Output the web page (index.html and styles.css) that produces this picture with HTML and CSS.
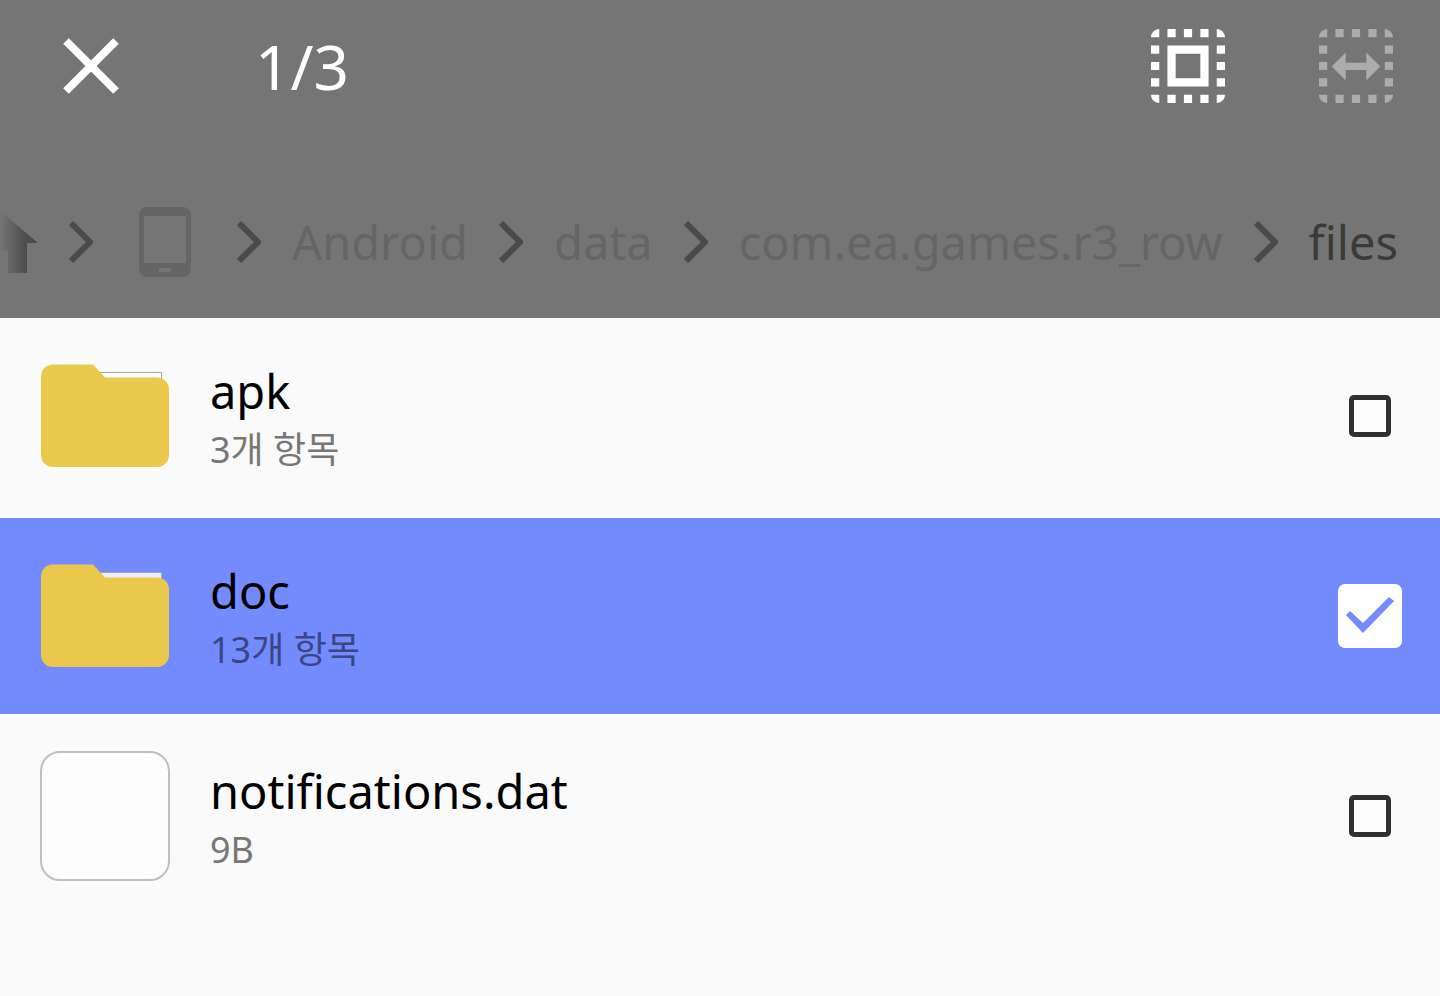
FILE: index.html
```html
<!DOCTYPE html>
<html lang="ko">
<head>
  <meta charset="UTF-8" />
  <meta name="viewport" content="width=device-width, initial-scale=1.0" />
  <title>files</title>
  <link rel="stylesheet" href="styles.css">
</head>
<body>
  <!-- Shared icons -->
  <svg class="icon-defs" aria-hidden="true">
    <symbol id="chevron" viewBox="0 0 24 42">
      <path d="M2 2l19 19L2 40" fill="none" stroke="currentColor" stroke-width="6" />
    </symbol>
    <symbol id="folder" viewBox="0 0 130 104">
      <path class="paper" d="M56 8.500H121.500V20H56z" />
      <path fill="#eac84b" d="M13 .5H53L65 13.500H117a12 12 0 0 1 12 12V91a12 12 0 0 1-12 12H13A12 12 0 0 1 1 91V12.500A12 12 0 0 1 13 .5z" />
    </symbol>
    <symbol id="select-frame" viewBox="3 3 18 18">
      <path fill="currentColor" d="M3 5h2V3c-1.100 0-2 .9-2 2zm0 8h2v-2H3v2zm4 8h2v-2H7v2zM3 9h2V7H3v2zm10-6h-2v2h2V3zm6 0v2h2c0-1.100-.9-2-2-2zM5 21v-2H3c0 1.100.9 2 2 2zm-2-4h2v-2H3v2zM9 3H7v2h2V3zm2 18h2v-2h-2v2zm8-8h2v-2h-2v2zm0 8c1.100 0 2-.9 2-2h-2v2zm0-12h2V7h-2v2zm0 8h2v-2h-2v2zm-4 4h2v-2h-2v2zm0-16h2V3h-2v2z" />
    </symbol>
  </svg>

  <header>
    <div class="toolbar">
      <button class="icon-button close" type="button" aria-label="닫기">
        <svg width="56" height="56" viewBox="0 0 56 56"><path d="M3 3l50 50M53 3L3 53" stroke="currentColor" stroke-width="8" /></svg>
      </button>
      <h1>1/3</h1>
      <div class="actions">
        <button class="icon-button" type="button" aria-label="전체 선택">
          <svg width="74" height="74" viewBox="3 3 18 18">
            <use href="#select-frame" x="3" y="3" width="18" height="18" />
            <path fill="currentColor" d="M7 17h10V7H7v10zm2-8h6v6H9V9z" />
          </svg>
        </button>
        <button class="icon-button" type="button" aria-label="범위 선택" disabled>
          <svg width="74" height="74" viewBox="3 3 18 18">
            <use href="#select-frame" x="3" y="3" width="18" height="18" />
            <path fill="currentColor" d="M6.100 12.100L9.500 8.700V11.200H14.500V8.700L17.900 12.100L14.500 15.500V13H9.500V15.500z" />
          </svg>
        </button>
      </div>
    </div>

    <nav class="breadcrumb" aria-label="경로">
      <a href="#home" aria-label="홈">
        <svg width="40" height="66" viewBox="0 0 40 66">
          <defs>
            <linearGradient id="fade" gradientUnits="userSpaceOnUse" x1="2" y1="0" x2="40" y2="0">
              <stop offset="0" stop-color="#4a4a4a" stop-opacity="0" />
              <stop offset=".65" stop-color="#4a4a4a" stop-opacity=".9" />
              <stop offset="1" stop-color="#4a4a4a" />
            </linearGradient>
          </defs>
          <path fill="url(#fade)" d="M0 0L40 34H29V64H10V42H0z" />
        </svg>
      </a>
      <svg class="chevron"><use href="#chevron" /></svg>
      <a class="device" href="#device" aria-label="내장 메모리">
        <svg width="54" height="72" viewBox="0 0 54 72">
          <path fill="currentColor" fill-rule="evenodd" d="M9 1H45a8 8 0 0 1 8 8V63a8 8 0 0 1-8 8H9a8 8 0 0 1-8-8V9a8 8 0 0 1 8-8zM6 10V57H48V10zM21 62V66H33V62z" />
        </svg>
      </a>
      <svg class="chevron"><use href="#chevron" /></svg>
      <a href="#android">Android</a>
      <svg class="chevron"><use href="#chevron" /></svg>
      <a href="#data">data</a>
      <svg class="chevron"><use href="#chevron" /></svg>
      <a href="#game">com.ea.games.r3_row</a>
      <svg class="chevron"><use href="#chevron" /></svg>
      <a class="current" href="#files" aria-current="page">files</a>
    </nav>
  </header>

  <main class="file-list">
    <label class="file-row">
      <svg class="folder"><use href="#folder" /></svg>
      <span class="file-info">
        <span class="file-name">apk</span>
        <span class="file-meta">3개 항목</span>
      </span>
      <input type="checkbox">
    </label>
    <label class="file-row selected">
      <svg class="folder"><use href="#folder" /></svg>
      <span class="file-info">
        <span class="file-name">doc</span>
        <span class="file-meta">13개 항목</span>
      </span>
      <input type="checkbox" checked>
    </label>
    <label class="file-row">
      <span class="file-icon"></span>
      <span class="file-info">
        <span class="file-name">notifications.dat</span>
        <span class="file-meta">9B</span>
      </span>
      <input type="checkbox">
    </label>
  </main>
</body>
</html>
```
FILE: styles.css
```css
* {
  box-sizing: border-box;
}
body {
  margin: 0;
  min-height: 100vh;
  font-family: "Noto Sans", "Noto Sans CJK KR", sans-serif;
  font-variant-ligatures: none;
  background: #fafafa;
  color: #000;
}
svg {
  display: block;
  flex-shrink: 0;
}
.icon-defs {
  position: absolute;
  width: 0;
  height: 0;
}
header {
  display: flex;
  flex-direction: column;
  gap: 34px;
  background: #757575;
}
.toolbar {
  display: flex;
  align-items: center;
  height: 132px;
  padding: 0 47px 0 63px;
  color: #fff;
}
.toolbar h1 {
  margin: 0 0 0 136px;
  font-size: 62px;
  font-weight: 400;
  line-height: 88px;
}
.icon-button {
  padding: 0;
  border: 0;
  background: none;
  color: #fff;
  cursor: pointer;
}
.icon-button:disabled {
  color: #acacac;
  cursor: default;
}
.actions {
  display: flex;
  gap: 94px;
  margin-left: auto;
}

/* Path */
.breadcrumb {
  display: flex;
  align-items: center;
  justify-content: flex-end;
  gap: 31px;
  height: 152px;
  padding-right: 42px;
  overflow: hidden;
  font-size: 47px;
  line-height: 64px;
  white-space: nowrap;
}
.breadcrumb a {
  color: #656565;
  text-decoration: none;
}
.breadcrumb .current {
  color: #3a3a3a;
}
.breadcrumb .device {
  margin: 0 14px;
}
.chevron {
  width: 24px;
  height: 42px;
  color: #4a4a4a;
}

/* Files */
.file-list {
  display: flex;
  flex-direction: column;
  gap: 4px;
}
.file-row {
  display: flex;
  align-items: center;
  height: 196px;
  padding: 0 38px 0 40px;
  color: #777;
  cursor: pointer;
}
.file-row.selected {
  background: #748aff;
  color: #3b4682;
}
.folder {
  width: 130px;
  height: 104px;
}
.paper {
  fill: #fff;
  fill-opacity: 0.85;
  stroke: #a5a5a5;
}
.file-icon {
  width: 130px;
  height: 130px;
  border: 2px solid #c0c0c0;
  border-radius: 20px;
  background: #fdfdfd;
}
.file-info {
  display: flex;
  flex: 1;
  flex-direction: column;
  margin-left: 40px;
  padding-top: 4px;
}
.file-name {
  color: #000;
  font-size: 47px;
  line-height: 64px;
}
.file-meta {
  font-size: 36px;
  line-height: 54px;
}
input[type="checkbox"] {
  appearance: none;
  width: 42px;
  height: 42px;
  margin: 0 11px;
  border: 5px solid #303030;
  border-radius: 5px;
  background: #fdfdfd;
}
input[type="checkbox"]:checked {
  width: 64px;
  height: 64px;
  margin: 0;
  border: 0;
  border-radius: 7px;
  background: #fff;
}
input[type="checkbox"]:checked::after {
  content: "";
  display: block;
  width: 64px;
  height: 64px;
  background: #748aff;
  clip-path: polygon(8px 31px, 12px 27px, 25px 39px, 51px 13px, 56px 17px, 25px 49px);
}
```
